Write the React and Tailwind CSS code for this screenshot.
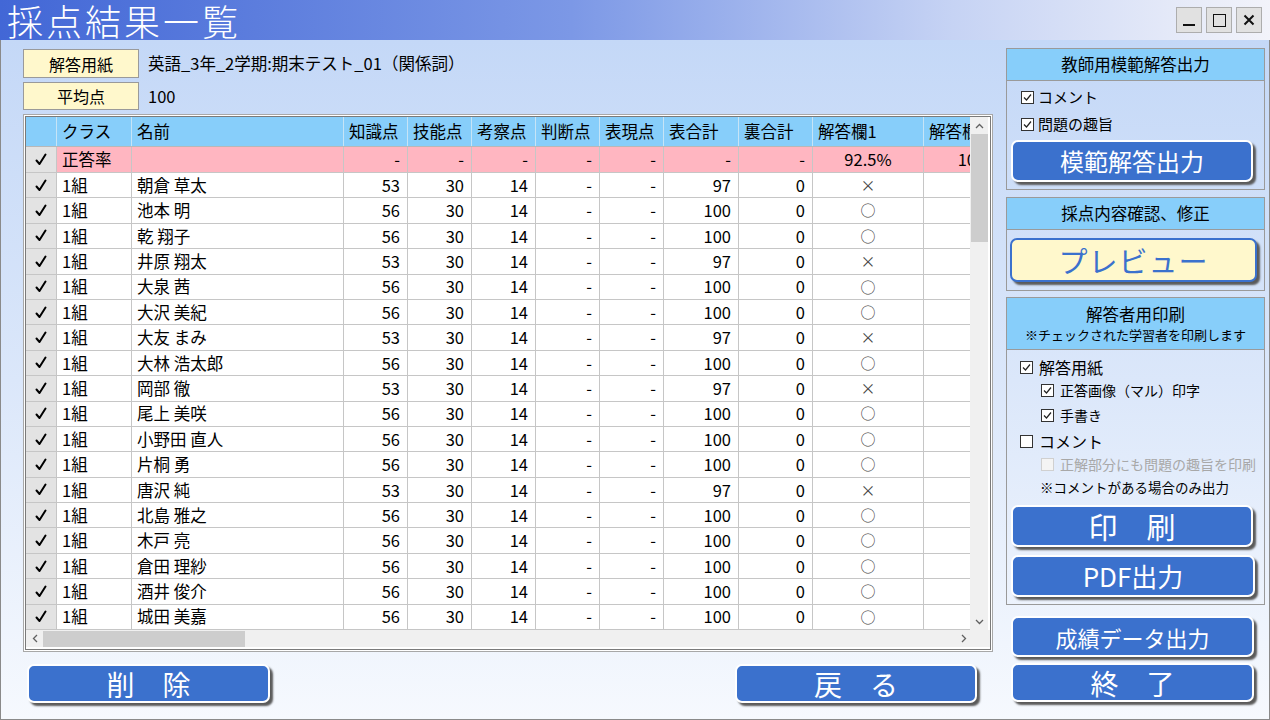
import React from "react";

const rows = [
  ["朝倉 草太", 53, 97, "×"],
  ["池本 明", 56, 100, "○"],
  ["乾 翔子", 56, 100, "○"],
  ["井原 翔太", 53, 97, "×"],
  ["大泉 茜", 56, 100, "○"],
  ["大沢 美紀", 56, 100, "○"],
  ["大友 まみ", 53, 97, "×"],
  ["大林 浩太郎", 56, 100, "○"],
  ["岡部 徹", 53, 97, "×"],
  ["尾上 美咲", 56, 100, "○"],
  ["小野田 直人", 56, 100, "○"],
  ["片桐 勇", 56, 100, "○"],
  ["唐沢 純", 53, 97, "×"],
  ["北島 雅之", 56, 100, "○"],
  ["木戸 亮", 56, 100, "○"],
  ["倉田 理紗", 56, 100, "○"],
  ["酒井 俊介", 56, 100, "○"],
  ["城田 美嘉", 56, 100, "○"],
];

const headers = [
  ["クラス", "w-[75px]"],
  ["名前", "w-[212px]"],
  ["知識点", "w-[64px]"],
  ["技能点", "w-[64px]"],
  ["考察点", "w-[64px]"],
  ["判断点", "w-[64px]"],
  ["表現点", "w-[64px]"],
  ["表合計", "w-[75px]"],
  ["裏合計", "w-[74px]"],
  ["解答欄1", "w-[111px]"],
  ["解答欄2", "w-[111px]"],
];

function Check({ checked = true, disabled = false }) {
  return (
    <span
      className={`inline-flex w-[13px] h-[13px] shrink-0 items-center justify-center border ${
        disabled ? "border-[#d0d0d0] bg-[#f4f4f4]" : "border-[#333] bg-white"
      }`}
    >
      {checked && (
        <svg width="9" height="9" viewBox="0 0 9 9">
          <path d="M1 4.5 L3.5 7 L8 1.5" fill="none" stroke="#222" strokeWidth="1.2" />
        </svg>
      )}
    </span>
  );
}

function BlueButton({ className = "", children }) {
  return (
    <div
      className={`flex items-center justify-center bg-[#3b71cd] text-white border-2 border-white rounded-[7px] shadow-[3px_3px_2px_#5a5a5a] ${className}`}
    >
      {children}
    </div>
  );
}

function Cell({ w, align = "left", className = "", children }) {
  const a = align === "right" ? "justify-end pr-[7px]" : align === "center" ? "justify-center" : "justify-start pl-[5px]";
  return (
    <div className={`${w} shrink-0 flex items-center ${a} border-r border-[#c6c6c6] whitespace-nowrap overflow-hidden ${className}`}>
      {children}
    </div>
  );
}

function CheckCell() {
  return (
    <div className="w-[31px] shrink-0 flex items-center justify-center bg-[#e3e3e3] border-r border-[#c6c6c6]">
      <svg width="12" height="13" viewBox="0 0 12 13">
        <path d="M1.5 7.5 L4.5 11 L10.5 1.5" fill="none" stroke="#000" strokeWidth="2" strokeLinecap="round" strokeLinejoin="round" />
      </svg>
    </div>
  );
}

export default function App() {
  return (
    <div className="w-[1270px] h-[720px] overflow-hidden font-['Noto_Sans_CJK_JP',sans-serif] text-black flex flex-col">
      {/* Title bar */}
      <div className="h-[40px] shrink-0 flex items-center justify-between bg-[linear-gradient(to_right,#4267d6_0%,#7c98e6_45%,#c6d3f4_75%,#f2f3fa_100%)]">
        <div className="pl-[7px] text-white text-[36px] leading-[40px] font-light tracking-[3px]">採点結果一覧</div>
        <div className="flex gap-[4px] pr-[8px] items-center">
          <div className="w-[26px] h-[26px] bg-[#e1e1e1] border border-[#adadad] flex items-end justify-center pb-[6px]">
            <div className="w-[12px] h-[2px] bg-[#111]" />
          </div>
          <div className="w-[26px] h-[26px] bg-[#e1e1e1] border border-[#adadad] flex items-center justify-center">
            <div className="w-[13px] h-[13px] border-[1.5px] border-[#111]" />
          </div>
          <div className="w-[26px] h-[26px] bg-[#e1e1e1] border border-[#adadad] flex items-center justify-center">
            <svg width="12" height="12" viewBox="0 0 12 12">
              <path d="M1.5 1.5 L10.5 10.5 M10.5 1.5 L1.5 10.5" stroke="#111" strokeWidth="2" />
            </svg>
          </div>
        </div>
      </div>

      {/* Body */}
      <div className="flex-1 flex gap-[13px] pl-[22px] pt-[8px] bg-[linear-gradient(to_bottom,#c4d8f7_0%,#dbe7fa_50%,#f6f9fe_100%)] border-l border-r border-b border-[#8a8a8a]">
        {/* Left column */}
        <div className="w-[970px] flex flex-col pt-px">
          <div className="flex items-center h-[29px]">
            <div className="w-[116px] h-full bg-[#fff8cc] border border-[#9a9a9a] flex items-center justify-center text-[16px]">解答用紙</div>
            <div className="pl-[9px] text-[16.5px]">英語_3年_2学期:期末テスト_01（関係詞）</div>
          </div>
          <div className="flex items-center h-[28px] mt-[4px]">
            <div className="w-[116px] h-full bg-[#fff8cc] border border-[#9a9a9a] flex items-center justify-center text-[16px]">平均点</div>
            <div className="pl-[9px] text-[16.5px]">100</div>
          </div>

          {/* Table */}
          <div className="mt-[4px] h-[538px] border border-[#a8a8a8] bg-white p-px">
            <div className="w-full h-full border border-[#7a7a7a] bg-white flex flex-col">
              <div className="flex h-[513px]">
                <div className="w-[944px] overflow-hidden text-[16.5px]">
                  {/* header */}
                  <div className="flex h-[30px] bg-[#87cefa] border-b border-[#b8b8b8] w-[1020px]">
                    <div className="w-[31px] shrink-0 border-r border-[#c6e4f6]" />
                    {headers.map(([t, w]) => (
                      <div key={t} className={`${w} shrink-0 flex items-center pl-[5px] border-r border-[#c6e4f6] whitespace-nowrap overflow-hidden`}>
                        {t}
                      </div>
                    ))}
                  </div>
                  {/* pink row */}
                  <div className="flex h-[26px] bg-[#ffb6c1] border-b border-[#c6c6c6] w-[1020px]">
                    <CheckCell />
                    <Cell w="w-[75px]">正答率</Cell>
                    <Cell w="w-[212px]"></Cell>
                    <Cell w="w-[64px]" align="right">-</Cell>
                    <Cell w="w-[64px]" align="right">-</Cell>
                    <Cell w="w-[64px]" align="right">-</Cell>
                    <Cell w="w-[64px]" align="right">-</Cell>
                    <Cell w="w-[64px]" align="right">-</Cell>
                    <Cell w="w-[75px]" align="right">-</Cell>
                    <Cell w="w-[74px]" align="right">-</Cell>
                    <Cell w="w-[111px]" align="center">92.5%</Cell>
                    <Cell w="w-[111px]" align="center">100%</Cell>
                  </div>
                  {rows.map(([name, k, total, mark]) => (
                    <div key={name} className="flex h-[25.4px] bg-white border-b border-[#c6c6c6] w-[1020px]">
                      <CheckCell />
                      <Cell w="w-[75px]">1組</Cell>
                      <Cell w="w-[212px]">{name}</Cell>
                      <Cell w="w-[64px]" align="right">{k}</Cell>
                      <Cell w="w-[64px]" align="right">30</Cell>
                      <Cell w="w-[64px]" align="right">14</Cell>
                      <Cell w="w-[64px]" align="right">-</Cell>
                      <Cell w="w-[64px]" align="right">-</Cell>
                      <Cell w="w-[75px]" align="right">{total}</Cell>
                      <Cell w="w-[74px]" align="right">0</Cell>
                      <Cell w="w-[111px]" align="center">
                        <span className="text-[#444] text-[15px]">{mark}</span>
                      </Cell>
                      <Cell w="w-[111px]" align="center"></Cell>
                    </div>
                  ))}
                </div>
                {/* vertical scrollbar */}
                <div className="w-[18px] bg-[#f0f0f0] flex flex-col items-center">
                  <div className="h-[17px] flex items-center justify-center">
                    <svg width="9" height="6" viewBox="0 0 9 6">
                      <path d="M1 5 L4.5 1.5 L8 5" fill="none" stroke="#606060" strokeWidth="1.3" />
                    </svg>
                  </div>
                  <div className="w-[17px] h-[108px] bg-[#cdcdcd]" />
                  <div className="flex-1" />
                  <div className="h-[17px] flex items-center justify-center">
                    <svg width="9" height="6" viewBox="0 0 9 6">
                      <path d="M1 1 L4.5 4.5 L8 1" fill="none" stroke="#606060" strokeWidth="1.3" />
                    </svg>
                  </div>
                </div>
              </div>
              {/* horizontal scrollbar */}
              <div className="h-[17px] bg-[#f0f0f0] flex items-center">
                <div className="w-[17px] h-full flex items-center justify-center">
                  <svg width="6" height="9" viewBox="0 0 6 9">
                    <path d="M5 1 L1.5 4.5 L5 8" fill="none" stroke="#606060" strokeWidth="1.3" />
                  </svg>
                </div>
                <div className="w-[202px] h-[16px] bg-[#cdcdcd]" />
                <div className="flex-1" />
                <div className="w-[17px] h-full flex items-center justify-center mr-[18px]">
                  <svg width="6" height="9" viewBox="0 0 6 9">
                    <path d="M1 1 L4.5 4.5 L1 8" fill="none" stroke="#606060" strokeWidth="1.3" />
                  </svg>
                </div>
              </div>
            </div>
          </div>

          {/* bottom buttons */}
          <div className="flex mt-[12px] h-[39px]">
            <BlueButton className="ml-[4px] w-[243px] h-[39px] text-[28px] leading-none">削　除</BlueButton>
            <BlueButton className="ml-[465px] w-[242px] h-[39px] text-[28px] leading-none">戻　る</BlueButton>
          </div>
        </div>

        {/* Right column */}
        <div className="w-[259px] flex flex-col">
          {/* Section 1 */}
          <div className="h-[142px] border border-[#9a9a9a] flex flex-col">
            <div className="h-[32px] bg-[#87cefa] border-b border-[#9a9a9a] flex items-center justify-center text-[16.5px]">教師用模範解答出力</div>
            <div className="flex items-center gap-[4px] pl-[14px] mt-[7px] h-[18px] text-[15px]">
              <Check /> コメント
            </div>
            <div className="flex items-center gap-[4px] pl-[14px] mt-[9px] h-[18px] text-[15px]">
              <Check /> 問題の趣旨
            </div>
            <BlueButton className="ml-[4px] mt-[7px] w-[242px] h-[42px] text-[24px] leading-none">模範解答出力</BlueButton>
          </div>

          {/* Section 2 */}
          <div className="mt-[7px] h-[94px] border border-[#9a9a9a] flex flex-col">
            <div className="h-[32px] bg-[#87cefa] border-b border-[#9a9a9a] flex items-center justify-center text-[16.5px]">採点内容確認、修正</div>
            <div className="ml-[3px] mt-[8px] w-[247px] h-[44px] flex items-center justify-center bg-[#fff8cc] border-2 border-[#3b71cd] rounded-[7px] shadow-[3px_3px_2px_#5a5a5a] text-[#3b71cd] text-[29px] leading-none tracking-[1px]">
              プレビュー
            </div>
          </div>

          {/* Section 3 */}
          <div className="mt-[6px] h-[308px] border border-[#9a9a9a] flex flex-col">
            <div className="h-[52px] bg-[#87cefa] border-b border-[#9a9a9a] flex flex-col items-center justify-center">
              <div className="text-[16.5px] leading-[22px]">解答者用印刷</div>
              <div className="text-[13px] leading-[20px]">※チェックされた学習者を印刷します</div>
            </div>
            <div className="flex items-center gap-[6px] pl-[13px] mt-[7px] h-[20px] text-[16px]">
              <Check /> 解答用紙
            </div>
            <div className="flex items-center gap-[6px] pl-[34px] mt-[3px] h-[20px] text-[14px]">
              <Check /> 正答画像（マル）印字
            </div>
            <div className="flex items-center gap-[6px] pl-[34px] mt-[5px] h-[20px] text-[14px]">
              <Check /> 手書き
            </div>
            <div className="flex items-center gap-[6px] pl-[13px] mt-[6px] h-[20px] text-[16px]">
              <Check checked={false} /> コメント
            </div>
            <div className="flex items-center gap-[6px] pl-[34px] mt-[3px] h-[20px] text-[14px] text-[#a8a8a8]">
              <Check checked={false} disabled /> 正解部分にも問題の趣旨を印刷
            </div>
            <div className="pl-[33px] mt-[3px] h-[20px] flex items-center text-[13.5px]">※コメントがある場合のみ出力</div>
            <BlueButton className="ml-[4px] mt-[8px] w-[242px] h-[42px] text-[29px] leading-none">印　刷</BlueButton>
            <BlueButton className="ml-[4px] mt-[8px] w-[244px] h-[42px] text-[26px] leading-none">PDF出力</BlueButton>
          </div>

          <BlueButton className="ml-[5px] mt-[11px] w-[243px] h-[41px] text-[22px] leading-none">成績データ出力</BlueButton>
          <BlueButton className="ml-[5px] mt-[6px] w-[243px] h-[39px] text-[28px] leading-none">終　了</BlueButton>
        </div>
      </div>
    </div>
  );
}
